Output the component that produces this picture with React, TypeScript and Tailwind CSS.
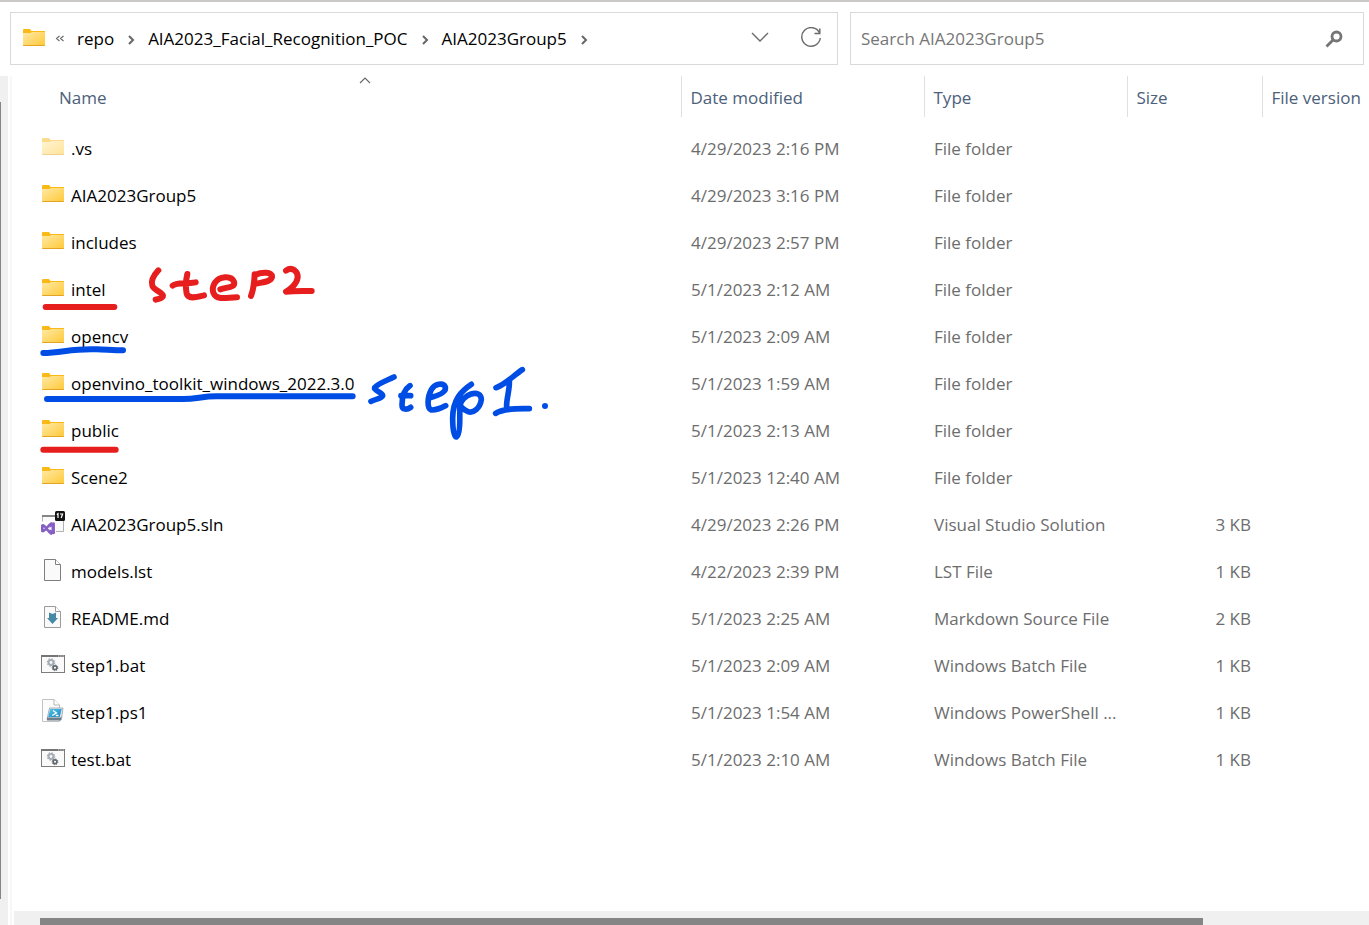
import React from "react";

type IconKind = "folder" | "folderHidden" | "solution" | "file" | "markdown" | "batch" | "powershell";

interface Entry {
  name: string;
  icon: IconKind;
  modified: string;
  type: string;
  size?: string;
}

const entries: Entry[] = [
  { name: ".vs", icon: "folderHidden", modified: "4/29/2023 2:16 PM", type: "File folder" },
  { name: "AIA2023Group5", icon: "folder", modified: "4/29/2023 3:16 PM", type: "File folder" },
  { name: "includes", icon: "folder", modified: "4/29/2023 2:57 PM", type: "File folder" },
  { name: "intel", icon: "folder", modified: "5/1/2023 2:12 AM", type: "File folder" },
  { name: "opencv", icon: "folder", modified: "5/1/2023 2:09 AM", type: "File folder" },
  { name: "openvino_toolkit_windows_2022.3.0", icon: "folder", modified: "5/1/2023 1:59 AM", type: "File folder" },
  { name: "public", icon: "folder", modified: "5/1/2023 2:13 AM", type: "File folder" },
  { name: "Scene2", icon: "folder", modified: "5/1/2023 12:40 AM", type: "File folder" },
  { name: "AIA2023Group5.sln", icon: "solution", modified: "4/29/2023 2:26 PM", type: "Visual Studio Solution", size: "3 KB" },
  { name: "models.lst", icon: "file", modified: "4/22/2023 2:39 PM", type: "LST File", size: "1 KB" },
  { name: "README.md", icon: "markdown", modified: "5/1/2023 2:25 AM", type: "Markdown Source File", size: "2 KB" },
  { name: "step1.bat", icon: "batch", modified: "5/1/2023 2:09 AM", type: "Windows Batch File", size: "1 KB" },
  { name: "step1.ps1", icon: "powershell", modified: "5/1/2023 1:54 AM", type: "Windows PowerShell ...", size: "1 KB" },
  { name: "test.bat", icon: "batch", modified: "5/1/2023 2:10 AM", type: "Windows Batch File", size: "1 KB" },
];

function FolderShape() {
  return (
    <>
      <path d="M1 4a1 1 0 0 1 1-1h6l1.500 2H23v3H1z" fill="#fbb917" />
      <path d="M1 7h7.500L10 6h13v13a1 1 0 0 1-1 1H2a1 1 0 0 1-1-1z" fill="url(#folderFill)" />
      <path d="M1 19h22a1 1 0 0 1-1 1H2a1 1 0 0 1-1-1z" fill="#e5a323" />
    </>
  );
}

function PageShape({ stroke }: { stroke: string }) {
  return (
    <>
      <path d="M3.500 1.500h11l5 5v16h-16z" fill="#fafafa" stroke={stroke} />
      <path d="M14.500 1.500v5h5" fill="#fff" stroke={stroke} />
    </>
  );
}

function FileIcon({ kind }: { kind: IconKind }) {
  return (
    <svg viewBox="0 0 24 24" className="mb-[3px] h-6 w-6 shrink-0 overflow-visible" aria-hidden="true">
      {kind === "folder" && <FolderShape />}
      {kind === "folderHidden" && (
        <g opacity="0.5">
          <FolderShape />
        </g>
      )}
      {kind === "solution" && (
        <>
          <path d="M1.500 4.500h21v16h-21z" fill="#fafafa" stroke="#b0b0b0" />
          <path d="M1 4h14v2H1z" fill="#858585" />
          <path d="M0 10.500h15v13.500H0z" fill="#fff" />
          <path
            d="M1.300 14.500v5.500M2 20.200c3-.5 4.500-5.500 8-7.700v10c-3.500-2.500-5-7-8-8.200M12.500 12.500v9.500"
            fill="none"
            stroke="#865fc5"
            strokeWidth="2.600"
            strokeLinejoin="round"
            strokeLinecap="round"
          />
          <path d="M10 11.200l3.800 1.300v9.800L10 23.800z" fill="#865fc5" />
          <path d="M8 17.500l2.500-2v4z" fill="#fff" />
          <rect x="14" y="0" width="10" height="10" rx="1.500" fill="#111" />
          <path d="M15.800 3.500l1.200-.8V7M19 3h2.600l-1.400 4" fill="none" stroke="#fff" strokeWidth="1.200" />
        </>
      )}
      {kind === "file" && <PageShape stroke="#7f7f7f" />}
      {kind === "markdown" && (
        <>
          <PageShape stroke="#9c9c9c" />
          <path d="M8 7.500l3.500 1.500L15 7.500V13h2l-5.500 6L6 13h2z" fill="#4589a5" />
        </>
      )}
      {kind === "batch" && (
        <>
          <rect x="0.500" y="3.500" width="23" height="17" fill="#fafafa" stroke="#7d7d7d" />
          <path d="M0 3h24v2H0z" fill="#757575" />
          <path d="M17 4h1.200M19.300 4h1.200M21.600 4h1.200" stroke="#ddd" />
          <circle cx="10" cy="10.500" r="2.400" fill="none" stroke="#a6adb6" strokeWidth="2" />
          <circle cx="10" cy="10.500" r="3.700" fill="none" stroke="#a6adb6" strokeWidth="1.200" strokeDasharray="1.450 1.450" />
          <circle cx="14" cy="15.800" r="1.900" fill="none" stroke="#626a71" strokeWidth="1.700" />
          <circle cx="14" cy="15.800" r="2.900" fill="none" stroke="#626a71" strokeWidth="0.900" strokeDasharray="1.140 1.140" />
        </>
      )}
      {kind === "powershell" && (
        <>
          <path d="M1.500.5h11.500l5.500 5.500v16.500h-17z" fill="#fcfcfc" stroke="#c2c2c2" />
          <path d="M13 .5V6h5.500" fill="#fff" stroke="#b5b5b5" />
          <path d="M8.500 9H22l-1.500 11.500H6z" fill="#e2e8ee" stroke="#8b979f" strokeWidth="0.700" />
          <path d="M9.200 10h11.500l-2 8H7.200z" fill="url(#shellFill)" />
          <path d="M6 18.500h13.500l1-1.500-.5 4.500H6z" fill="#6d7f8c" />
          <path d="M12 11.500l3.500 2.400-4.300 2.600M14.800 16.500h2.700" fill="none" stroke="#fff" strokeWidth="1.300" />
        </>
      )}
    </svg>
  );
}

function Chevron() {
  return (
    <svg viewBox="0 0 8 12" className="mt-[3px] h-3 w-2 shrink-0" aria-hidden="true">
      <path d="M2 2l4 4-4 4" fill="none" stroke="#666" strokeWidth="2" />
    </svg>
  );
}

function AddressBar() {
  return (
    <nav aria-label="Address" className="flex min-w-0 flex-1 items-center border border-[#d9d9d9] pl-[11px] pr-[14px]">
      <svg viewBox="0 0 24 24" className="mb-px h-6 w-6 shrink-0" aria-hidden="true">
        <FolderShape />
      </svg>
      <button aria-label="Earlier folders" className="ml-[6px] flex h-6 w-4 items-center justify-center">
        <svg viewBox="0 0 10 8" className="h-2 w-[10px]" aria-hidden="true">
          <path d="M4.500 1L1.500 3.500l3 2.500M8.500 1l-3 2.500 3 2.500" fill="none" stroke="#666" strokeWidth="1.100" />
        </svg>
      </button>
      <div className="ml-[9px] flex min-w-0 items-center gap-[13px] whitespace-nowrap text-black">
        <button>repo</button>
        <Chevron />
        <button>AIA2023_Facial_Recognition_POC</button>
        <Chevron />
        <button>AIA2023Group5</button>
        <Chevron />
      </div>
      <button aria-label="Previous locations" className="ml-auto flex h-8 w-8 items-center justify-center">
        <svg viewBox="0 0 18 10" className="mb-1 h-[10px] w-[18px]" aria-hidden="true">
          <path d="M1 1l8 8 8-8" fill="none" stroke="#6a6a6a" strokeWidth="1.400" />
        </svg>
      </button>
      <button aria-label="Refresh" className="ml-[23px] flex h-8 w-6 items-center justify-center">
        <svg viewBox="0 0 22 22" className="mb-[2px] h-[22px] w-[22px]" aria-hidden="true">
          <path d="M19.500 6A9.300 9.300 0 1 0 20.300 11" fill="none" stroke="#6a6a6a" strokeWidth="1.400" />
          <path d="M19.800 1.500v5h-5.300" fill="none" stroke="#6a6a6a" strokeWidth="1.500" />
        </svg>
      </button>
    </nav>
  );
}

function SearchBox() {
  return (
    <form
      role="search"
      onSubmit={(e: React.FormEvent) => e.preventDefault()}
      className="flex w-[514px] min-w-0 items-center border border-[#d9d9d9] pl-[10px] pr-[19px]"
    >
      <input
        type="search"
        aria-label="Search AIA2023Group5"
        placeholder="Search AIA2023Group5"
        className="min-w-0 flex-1 bg-transparent outline-none placeholder:text-[#767676]"
      />
      <button type="submit" aria-label="Search" className="flex h-6 w-5 items-center justify-center">
        <svg viewBox="0 0 18 18" className="h-[18px] w-[18px]" aria-hidden="true">
          <circle cx="11.500" cy="6.500" r="4.500" fill="none" stroke="#757575" strokeWidth="2.800" />
          <path d="M8 10l-6.500 6.500" stroke="#757575" strokeWidth="2.800" />
        </svg>
      </button>
    </form>
  );
}

/* Handwritten pen marks that lie over the file list. */
function PenMarks() {
  return (
    <svg
      viewBox="12 76 600 400"
      className="pointer-events-none absolute left-0 top-0 h-[400px] w-[600px]"
      role="img"
      aria-label="step 2, step 1"
    >
      <g fill="none" strokeLinecap="round" strokeLinejoin="round">
        <g transform="translate(30 255) scale(0.33333)" stroke="#e61e1e" strokeWidth="18">
          <path d="M47 156H253" />
          <path d="M385 46C372 60 362 78 367 92C372 106 398 112 399 122C399 130 386 131 377 134" />
          <path d="M428 92C440 80 465 88 497 82M472 57C466 82 467 100 470 116C475 134 500 126 522 121" />
          <path d="M571 103C592 96 618 98 612 80C603 60 568 64 554 84C542 106 550 126 572 129C588 130 604 127 621 127" />
          <path d="M674 58C673 82 670 104 663 123M674 60C696 50 728 50 726 66C722 82 694 82 678 86" />
          <path d="M768 47C786 34 804 48 803 68C800 88 780 104 768 110C792 107 820 108 845 108" />
        </g>
        <g transform="translate(30 255) scale(0.33333)" stroke="#004de6" strokeWidth="18">
          <path d="M40 294C95 293 130 280 200 283C230 284 255 286 279 286" />
        </g>
        <g transform="translate(30 360) scale(0.33333)" strokeWidth="18">
          <path d="M51 117H460C500 117 515 109 560 109H968" stroke="#004de6" />
          <path d="M40 269H257" stroke="#e61e1e" />
        </g>
        <g transform="translate(350 355) scale(0.33333)" stroke="#004de6" strokeWidth="17">
          <path d="M132 66C112 76 82 86 74 98C70 108 100 112 98 122C94 132 75 132 63 139" />
          <path d="M180 92C162 104 156 128 156 150C156 166 172 164 182 157M153 122H182" />
          <path d="M240 128C264 122 290 112 286 96C280 82 254 86 244 104C232 126 230 160 244 165C262 166 276 158 287 152" />
          <path d="M364 88C334 108 308 134 308 190C308 224 312 246 319 246C330 242 330 196 329 154C334 118 394 98 394 134C390 160 370 176 354 170C342 166 336 158 330 152" />
          <path d="M438 98C460 92 486 66 517 44M478 76C480 105 468 132 470 158M437 175C456 162 486 160 538 161" />
        </g>
      </g>
      <circle cx="545" cy="406" r="3" fill="#004de6" />
    </svg>
  );
}

function FileTable() {
  return (
    <table className="w-full table-fixed border-collapse whitespace-nowrap text-left text-[#6d6d6d]">
      <colgroup>
        <col />
        <col className="w-[243px]" />
        <col className="w-[203px]" />
        <col className="w-[135px]" />
        <col className="w-[107px]" />
      </colgroup>
      <thead>
        <tr className="h-[41px] text-[#4c607a]">
          <th className="relative p-0 pl-[47px] pt-[2px] font-normal" aria-sort="ascending">
            <svg viewBox="0 0 12 7" className="absolute left-[347px] top-px h-[7px] w-3" aria-hidden="true">
              <path d="M1 6l5-5 5 5" fill="none" stroke="#666" strokeWidth="1.100" />
            </svg>
            <button>Name</button>
          </th>
          <th className="border-l border-[#e0e0e0] p-0 pl-[9px] pt-[2px] font-normal">
            <button>Date modified</button>
          </th>
          <th className="border-l border-[#e0e0e0] p-0 pl-[9px] pt-[2px] font-normal">
            <button>Type</button>
          </th>
          <th className="border-l border-[#e0e0e0] p-0 pl-[9px] pt-[2px] font-normal">
            <button>Size</button>
          </th>
          <th className="border-l border-[#e0e0e0] p-0 pl-[9px] pt-[2px] font-normal">
            <button>File version</button>
          </th>
        </tr>
      </thead>
      <tbody className="before:block before:h-2">
        {entries.map((entry) => (
          <tr key={entry.name} className="h-[47px]">
            <td className="p-0 pl-[29px] text-black">
              <div className="flex items-center gap-[6px]">
                <FileIcon kind={entry.icon} />
                <span>{entry.name}</span>
              </div>
            </td>
            <td className="p-0 pl-[10px]">{entry.modified}</td>
            <td className="p-0 pl-[10px]">{entry.type}</td>
            <td className="p-0 pr-[11px] text-right">{entry.size}</td>
            <td className="p-0" />
          </tr>
        ))}
      </tbody>
    </table>
  );
}

export default function App() {
  return (
    <div className="flex min-h-screen flex-col border-t-2 border-[#cbc8c8] bg-white font-['Open_Sans','Noto_Sans',sans-serif] text-[17px] leading-6">
      <svg className="absolute h-0 w-0" aria-hidden="true">
        <defs>
          <linearGradient id="folderFill" x1="0" y1="0" x2="1" y2="1">
            <stop offset="0" stopColor="#ffe9a6" />
            <stop offset="1" stopColor="#ffc937" />
          </linearGradient>
          <linearGradient id="shellFill" x1="0" y1="0" x2="1" y2="1">
            <stop offset="0" stopColor="#55c5ee" />
            <stop offset="1" stopColor="#1686bd" />
          </linearGradient>
        </defs>
      </svg>
      <header className="mb-[11px] mt-[10px] flex h-[53px] gap-3 pl-[10px] pr-[5px]">
        <AddressBar />
        <SearchBox />
      </header>
      <main className="flex flex-1">
        <div className="flex w-2 shrink-0 bg-[#f0f0f0] pb-[26px] pt-[26px]">
          <div className="w-px bg-[#858585]" />
        </div>
        <div className="ml-[2px] w-[2px] shrink-0 bg-[#f7f7f7]" />
        <div className="flex min-w-0 flex-1 flex-col">
          <section aria-label="Files" className="relative flex-1">
            <FileTable />
            <PenMarks />
          </section>
          <div className="ml-[2px] flex h-[14px] items-end bg-[#f0f0f0] pl-[26px]">
            <div className="h-[7px] w-7/8 bg-[#858585]" />
          </div>
        </div>
      </main>
    </div>
  );
}
